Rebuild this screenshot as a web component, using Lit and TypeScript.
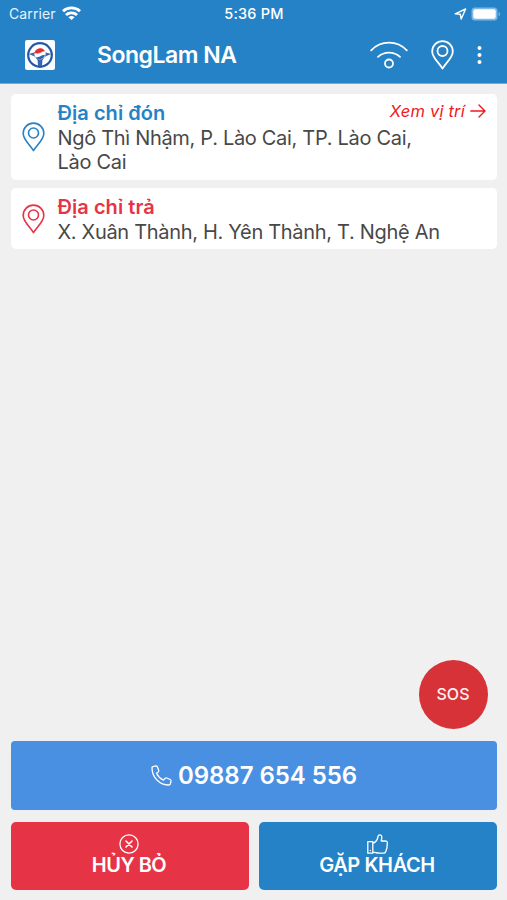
import { LitElement, html, svg, css } from "lit";
import { customElement } from "lit/decorators.js";

const pin = svg`<path d="M11.5 28.6C8 22.6 1.2 17.6 1.2 11.4a10.3 10.3 0 0 1 20.6 0C21.8 17.6 15 22.6 11.5 28.6Z"/><circle cx="11.5" cy="11" r="5"/>`;

@customElement("app-root")
export class AppRoot extends LitElement {
  static styles = css`
    :host {
      display: flex;
      flex-direction: column;
      position: relative;
      box-sizing: border-box;
      width: 507px;
      height: 900px;
      overflow: hidden;
      background: #f0f0f0;
      font-family: Inter, "Liberation Sans", sans-serif;
      color: #484848;
    }
    * { box-sizing: border-box; }
    svg { display: block; flex: none; fill: none; stroke: currentColor; stroke-linecap: round; stroke-linejoin: round; }
    .top { background: #2582c6; color: #fff; height: 84px; border-bottom: 1px solid #6eade0; flex: none; }
    .status { height: 27px; display: grid; grid-template-columns: 1fr auto 1fr; align-items: center; padding: 1px 6px 0 9px; font-size: 14px; line-height: 20px; }
    .left, .right { display: flex; align-items: center; }
    .left { gap: 6px; color: #e4f4ff; }
    .signal { stroke-linecap: butt; color: #fff; margin-top: -2px; }
    .carrier { letter-spacing: 0.1px; }
    .right { justify-content: flex-end; gap: 4px; }
    .time { font-weight: 550; font-size: 14.5px; letter-spacing: 0.2px; margin-left: -2px; }
    .bar { height: 56px; display: flex; align-items: center; padding: 0 25px; }
    .title { margin-left: 42px; flex: 1; font-size: 23px; font-weight: 600; line-height: 30px; letter-spacing: -0.48px; margin-top: -1px; }
    .tools { display: flex; align-items: center; }
    .tools .place { margin-left: 23px; }
    .tools .more { margin-left: 23px; }
    .cards { display: flex; flex-direction: column; gap: 8px; padding: 10px 10px 0 11px; }
    .card { display: flex; align-items: center; background: #fff; border-radius: 5px; padding: 7px 11px 5px 11px; }
    .card.from { height: 86px; }
    .card.to { height: 61px; }
    .mark { margin-top: -2px; }
    .text { flex: 1; margin-left: 12.5px; line-height: 24.5px; font-size: 20px; }
    .row { display: flex; justify-content: space-between; }
    .head { font-weight: 600; font-size: 20px; letter-spacing: 0.05px; }
    .from .mark, .from .head { color: #2582c6; }
    .to .mark, .to .head { color: #e63446; }
    .addr { display: block; white-space: nowrap; letter-spacing: -0.31px; }
    .link { display: flex; align-items: center; gap: 5px; color: #f01820; font-size: 16.5px; font-style: italic; line-height: 20px; height: 20px; letter-spacing: 0.2px; }
    .space { flex: 1; display: flex; justify-content: flex-end; align-items: flex-end; padding: 0 19px 12px 0; }
    .sos { width: 69px; height: 69px; border-radius: 50%; background: #d63237; color: #fff0f0; display: flex; align-items: center; justify-content: center; padding: 0 1px 1px 0; font-size: 16px; font-weight: 550; }
    .actions { display: grid; grid-template-columns: 238px 238px; gap: 12px 10px; padding: 0 10px 10px 11px; }
    .btn { height: 69px; border-radius: 5px; display: flex; align-items: center; justify-content: center; color: #fff; font-weight: 580; }
    .call { grid-column: span 2; background: #4a90e2; border-radius: 4px; gap: 6px; font-size: 24px; letter-spacing: -0.05px; }
    .stack { height: 68px; flex-direction: column; font-size: 20px; line-height: 22px; padding: 0 2px 2px 0; }
    .cancel { background: #e63446; letter-spacing: -0.5px; }
    .meet { background: #2582c6; letter-spacing: -0.4px; }
  `;

  render() {
    return html`
      <header class="top">
        <div class="status">
          <div class="left">
            <span class="carrier">Carrier</span>
            <svg class="signal" width="19" height="14" viewBox="0 0 19 14" stroke-width="2.9">
              <path d="M1 5.2C5.6.8 13.4.8 18 5.2M4 9c3-2.8 8-2.8 11 0"/>
              <path d="M6.4 11.200q3.100-2.500 6.200 0L9.500 14Z" fill="currentColor" stroke="none"/>
            </svg>
          </div>
          <span class="time">5:36 PM</span>
          <div class="right">
            <svg width="13" height="12" viewBox="0 0 13 12" stroke-width="1.4"><path d="M1.2 5.8 11.6 1 7.2 11 6.3 6.3Z"/></svg>
            <svg width="30" height="14" viewBox="0 0 30 14" stroke="none">
              <rect x=".5" y=".5" width="26" height="13" rx="3.5" fill="#7eb8e5" stroke="none"/>
              <rect x="2.3" y="2.2" width="22.4" height="9.6" rx="2" fill="#fff" stroke="none"/>
              <path d="M27.7 4.7q3 2.3 0 4.6Z" fill="#7eb8e5" stroke="none"/>
            </svg>
          </div>
        </div>
        <div class="bar">
          <svg width="30" height="30" viewBox="0 0 30 30">
            <rect width="30" height="30" rx="2" fill="#fbfdff" stroke="none"/>
            <circle cx="15" cy="15" r="11.8" stroke="#2456a6" stroke-width="2.2"/>
            <path d="M3.8 14 10 12.2l10 0 6.2 1.8-5.3 2.2c-1.8 1-2.5 2.7-3.5 4L17 26h-4l-.4-5.8c-1-1.3-1.7-3-3.5-4Z" fill="#3468b4" stroke="none"/>
            <circle cx="15" cy="13.7" r="5.7" fill="#fff" stroke="none"/>
            <path d="M9.8 12.8A5.4 5.4 0 0 1 19.6 11c-3.3-.2-4.2 3.3-9.8 1.8Z" fill="#e02f2f" stroke="#e02f2f" stroke-width=".7"/>
            <path d="M10.5 17c4.5 1 5-2 9.5-2.2a5.3 5.3 0 0 1-9.5 2.2Z" fill="#2b62b5" stroke="none"/>
          </svg>
          <span class="title">SongLam NA</span>
          <div class="tools">
            <svg width="38" height="28" viewBox="0 0 38 28" stroke-width="1.8">
              <path d="M1.2 9.3C11-.9 27-.9 36.8 9.3M8 15.8c6-5.7 16-5.7 22 0"/><circle cx="19" cy="22.5" r="4"/>
            </svg>
            <svg class="place" width="23" height="30" viewBox="0 0 23 30" stroke-width="1.8">${pin}</svg>
            <svg class="more" width="5" height="20" viewBox="0 0 5 20"><g fill="currentColor" stroke="none"><circle cx="2.5" cy="3" r="2"/><circle cx="2.5" cy="10" r="2"/><circle cx="2.5" cy="17" r="2"/></g></svg>
          </div>
        </div>
      </header>
      <main class="cards">
        <section class="card from">
          <svg class="mark" width="23" height="30" viewBox="0 0 23 30" stroke-width="1.6">${pin}</svg>
          <div class="text">
            <div class="row">
              <span class="head">Địa chỉ đón</span>
              <span class="link">Xem vị trí
                <svg width="16" height="14" viewBox="0 0 16 14" stroke-width="1.4"><path d="M.8 7h14M9 .9 15 7l-6 6.1"/></svg>
              </span>
            </div>
            <span class="addr">Ngô Thì Nhậm, P. Lào Cai, TP. Lào Cai,</span>
            <span class="addr">Lào Cai</span>
          </div>
        </section>
        <section class="card to">
          <svg class="mark" width="23" height="30" viewBox="0 0 23 30" stroke-width="1.6">${pin}</svg>
          <div class="text">
            <div class="head">Địa chỉ trả</div>
            <span class="addr">X. Xuân Thành, H. Yên Thành, T. Nghệ An</span>
          </div>
        </section>
      </main>
      <div class="space"><div class="sos">SOS</div></div>
      <footer class="actions">
        <div class="btn call">
          <svg width="21" height="21" viewBox="0 0 21 21" stroke-width="1.3"><path d="M1.8 1.6 5 .9q1 0 1.4 1L7.7 5.2q.3 1-.5 1.7L5.5 8.2c1.5 3.200 3.800 5.500 7 7l1.500-1.800q.7-.8 1.700-.4l3.500 1.500q1 .5.8 1.500l-.7 3q-.3 1-1.400 1C8.600 20 .9 12.300 1 2.800q0-1 .8-1.200Z"/></svg>
          <span>09887 654 556</span>
        </div>
        <div class="btn stack cancel">
          <svg width="20" height="20" viewBox="0 0 20 20" stroke-width="1.3"><circle cx="10" cy="10" r="9.1"/><path stroke-width="1.6" d="m7 7 6 6m0-6-6 6"/></svg>
          <span>HỦY BỎ</span>
        </div>
        <div class="btn stack meet">
          <svg width="21" height="20" viewBox="0 0 21 20" stroke-width="1.3"><path d="M.8 7.700h5v11.500h-5ZM5.800 9.500c3-1.500 4.500-3.500 5-6 .2-1.600.5-2.700 1.700-2.700 1.700 0 2.500 1.300 2.300 3.200L14.200 7h4.300c2 0 2.300 2 1.600 2.900.3 1 .2 2-.2 2.700.2.900 0 2-.5 2.500 0 1-.2 1.900-.7 2.400-.3 1.200-.8 1.700-2 1.700h-4.500c-2.200 0-3.500-1-6.400-1"/><path d="M3.300 16.300v.3"/></svg>
          <span>GẶP KHÁCH</span>
        </div>
      </footer>
    `;
  }
}
